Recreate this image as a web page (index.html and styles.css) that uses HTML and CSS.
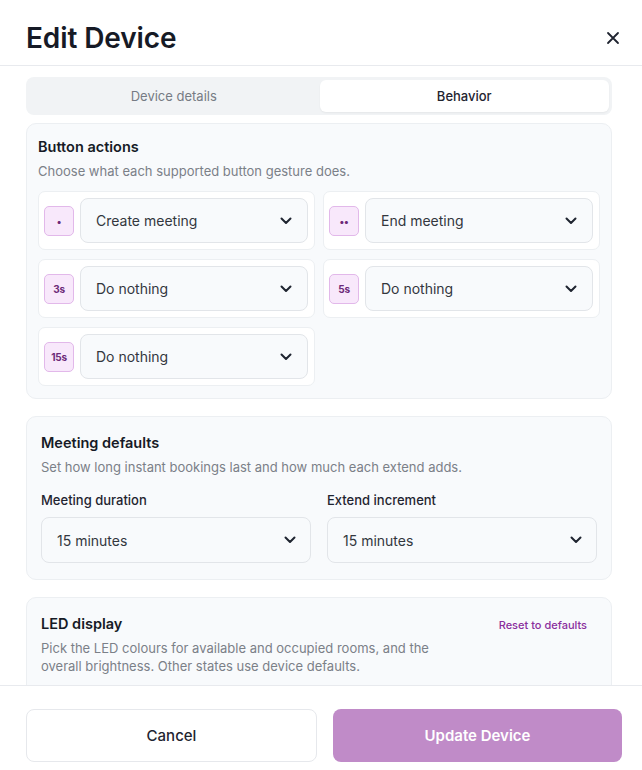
FILE: index.html
```html
<!DOCTYPE html>
<html lang="en">
<head>
    <meta charset="UTF-8">
    <meta name="viewport" content="width=device-width, initial-scale=1.0">
    <title>Edit Device</title>
    <link rel="stylesheet" href="styles.css">
</head>
<body>
    <div class="modal">
        <header class="modal-header">
            <h1>Edit Device</h1>
            <button class="close" aria-label="Close">
                <svg width="14" height="14" viewBox="0 0 14 14"><path d="M2 2L12 12M12 2L2 12" stroke="#1f2430" stroke-width="1.8" stroke-linecap="round"/></svg>
            </button>
        </header>

        <div class="modal-body">
            <div class="tabs">
                <div class="tab">Device details</div>
                <div class="tab active">Behavior</div>
            </div>

            <section class="card card-tight">
                <h2>Button actions</h2>
                <p class="hint">Choose what each supported button gesture does.</p>
                <div class="gesture-grid">
                    <div class="gesture">
                        <span class="badge">&bull;</span>
                        <div class="select">Create meeting <svg class="chev" width="12" height="8" viewBox="0 0 12 8"><path d="M1.5 1.5L6 6l4.5-4.5" fill="none" stroke="#1f2430" stroke-width="2" stroke-linecap="round" stroke-linejoin="round"/></svg></div>
                    </div>
                    <div class="gesture">
                        <span class="badge">&bull;&bull;</span>
                        <div class="select">End meeting <svg class="chev" width="12" height="8" viewBox="0 0 12 8"><path d="M1.5 1.5L6 6l4.5-4.5" fill="none" stroke="#1f2430" stroke-width="2" stroke-linecap="round" stroke-linejoin="round"/></svg></div>
                    </div>
                    <div class="gesture">
                        <span class="badge">3s</span>
                        <div class="select">Do nothing <svg class="chev" width="12" height="8" viewBox="0 0 12 8"><path d="M1.5 1.5L6 6l4.5-4.5" fill="none" stroke="#1f2430" stroke-width="2" stroke-linecap="round" stroke-linejoin="round"/></svg></div>
                    </div>
                    <div class="gesture">
                        <span class="badge">5s</span>
                        <div class="select">Do nothing <svg class="chev" width="12" height="8" viewBox="0 0 12 8"><path d="M1.5 1.5L6 6l4.5-4.5" fill="none" stroke="#1f2430" stroke-width="2" stroke-linecap="round" stroke-linejoin="round"/></svg></div>
                    </div>
                    <div class="gesture">
                        <span class="badge">15s</span>
                        <div class="select">Do nothing <svg class="chev" width="12" height="8" viewBox="0 0 12 8"><path d="M1.5 1.5L6 6l4.5-4.5" fill="none" stroke="#1f2430" stroke-width="2" stroke-linecap="round" stroke-linejoin="round"/></svg></div>
                    </div>
                </div>
            </section>

            <section class="card">
                <h2>Meeting defaults</h2>
                <p class="hint">Set how long instant bookings last and how much each extend adds.</p>
                <div class="field-row">
                    <div class="field">
                        <label>Meeting duration</label>
                        <div class="select">15 minutes <svg class="chev" width="12" height="8" viewBox="0 0 12 8"><path d="M1.5 1.5L6 6l4.5-4.5" fill="none" stroke="#1f2430" stroke-width="2" stroke-linecap="round" stroke-linejoin="round"/></svg></div>
                    </div>
                    <div class="field">
                        <label>Extend increment</label>
                        <div class="select">15 minutes <svg class="chev" width="12" height="8" viewBox="0 0 12 8"><path d="M1.5 1.5L6 6l4.5-4.5" fill="none" stroke="#1f2430" stroke-width="2" stroke-linecap="round" stroke-linejoin="round"/></svg></div>
                    </div>
                </div>
            </section>

            <section class="card">
                <div class="card-head">
                    <h2>LED display</h2>
                    <a class="reset" href="#">Reset to defaults</a>
                </div>
                <p class="hint narrow">Pick the LED colours for available and occupied rooms, and the overall brightness. Other states use device defaults.</p>
                <div class="spacer"></div>
            </section>
        </div>

        <footer class="modal-footer">
            <button class="btn btn-cancel">Cancel</button>
            <button class="btn btn-primary">Update Device</button>
        </footer>
    </div>
</body>
</html>
```

FILE: styles.css
```css
body {
    margin: 0;
    padding: 0;
    background: #ffffff;
    font-family: Inter, "Noto Sans", sans-serif;
    color: #1f2430;
}

.modal {
    width: 642px;
    height: 770px;
    display: flex;
    flex-direction: column;
    background: #ffffff;
}

.modal-header {
    height: 66px;
    flex: 0 0 auto;
    display: flex;
    align-items: center;
    justify-content: space-between;
    padding: 0 22px 0 26px;
    border-bottom: 1px solid #e8eaee;
    box-sizing: border-box;
}

.modal-header h1 {
    margin: 10px 0 0 0;
    font-size: 28px;
    font-weight: 600;
    color: #161a26;
    letter-spacing: -0.1px;
}

.close {
    background: none;
    border: none;
    padding: 0;
    width: 14px;
    height: 14px;
    margin-top: 10px;
    cursor: pointer;
}

.modal-body {
    flex: 1 1 auto;
    overflow: hidden;
    padding: 11px 30px 0 26px;
}

.tabs {
    display: flex;
    background: #f1f3f5;
    border-radius: 8px;
    padding: 3px;
    height: 38px;
    box-sizing: border-box;
}

.tab {
    flex: 1;
    display: flex;
    align-items: center;
    justify-content: center;
    font-size: 13px;
    color: #767b84;
    border-radius: 6px;
}

.tab.active {
    background: #ffffff;
    color: #1f2430;
    font-weight: 500;
    box-shadow: 0 1px 2px rgba(0,0,0,0.05);
    margin-left: 1px;
}

.card {
    background: #f8fafc;
    border: 1px solid #eceff2;
    border-radius: 10px;
    padding: 15px 14px 16px 14px;
    margin-top: 17px;
}

.card-tight {
    margin-top: 8px;
    padding: 12px 11px 12px 11px;
}

.card h2 {
    margin: 0;
    font-size: 14.5px;
    font-weight: 600;
    color: #161a26;
    line-height: 22px;
}

.hint {
    margin: 3px 0 0 0;
    font-size: 13px;
    line-height: 20px;
    color: #7b8088;
}

.hint.narrow {
    max-width: 420px;
    line-height: 18px;
    margin-top: 4px;
}

.gesture-grid {
    display: grid;
    grid-template-columns: 1fr 1fr;
    gap: 9px 8px;
    margin-top: 10px;
}

.gesture {
    display: flex;
    align-items: center;
    gap: 6px;
    background: #ffffff;
    border: 1px solid #eceff2;
    border-radius: 7px;
    padding: 6px 6px 6px 5px;
}

.badge {
    flex: 0 0 auto;
    width: 30px;
    height: 30px;
    box-sizing: border-box;
    display: flex;
    align-items: center;
    justify-content: center;
    background: #f8e8fb;
    border: 1px solid #e2b8ea;
    border-radius: 5px;
    font-size: 10px;
    font-weight: 700;
    color: #6c2a78;
    letter-spacing: -0.2px;
}

.select {
    flex: 1;
    height: 45px;
    box-sizing: border-box;
    display: flex;
    align-items: center;
    justify-content: space-between;
    padding: 0 15px 0 15px;
    background: #f8fafc;
    border: 1px solid #e2e5e9;
    border-radius: 8px;
    font-size: 14px;
    color: #33373e;
}

.field-row {
    display: grid;
    grid-template-columns: 1fr 1fr;
    gap: 16px;
    margin-top: 15px;
}

.field label {
    display: block;
    font-size: 13px;
    font-weight: 500;
    color: #1f2430;
    margin-bottom: 9px;
}

.field .select {
    height: 46px;
    padding: 0 14px 0 15px;
}

.card-head {
    display: flex;
    align-items: center;
    justify-content: space-between;
}

.reset {
    font-size: 11px;
    font-weight: 500;
    color: #8a2e9c;
    text-decoration: none;
    margin-right: 10px;
    margin-top: 2px;
}

.spacer {
    height: 40px;
}

.modal-footer {
    flex: 0 0 auto;
    display: flex;
    gap: 16px;
    padding: 23px 20px 8px 26px;
    border-top: 1px solid #e8eaee;
}

.btn {
    flex: 1;
    height: 53px;
    border-radius: 8px;
    font-family: Inter, "Noto Sans", sans-serif;
    font-size: 15px;
    cursor: pointer;
}

.btn-cancel {
    background: #ffffff;
    border: 1px solid #e6e8ec;
    color: #1f2430;
    font-weight: 500;
}

.btn-primary {
    background: #c08bc8;
    border: none;
    color: #ffffff;
    font-weight: 600;
}
```
